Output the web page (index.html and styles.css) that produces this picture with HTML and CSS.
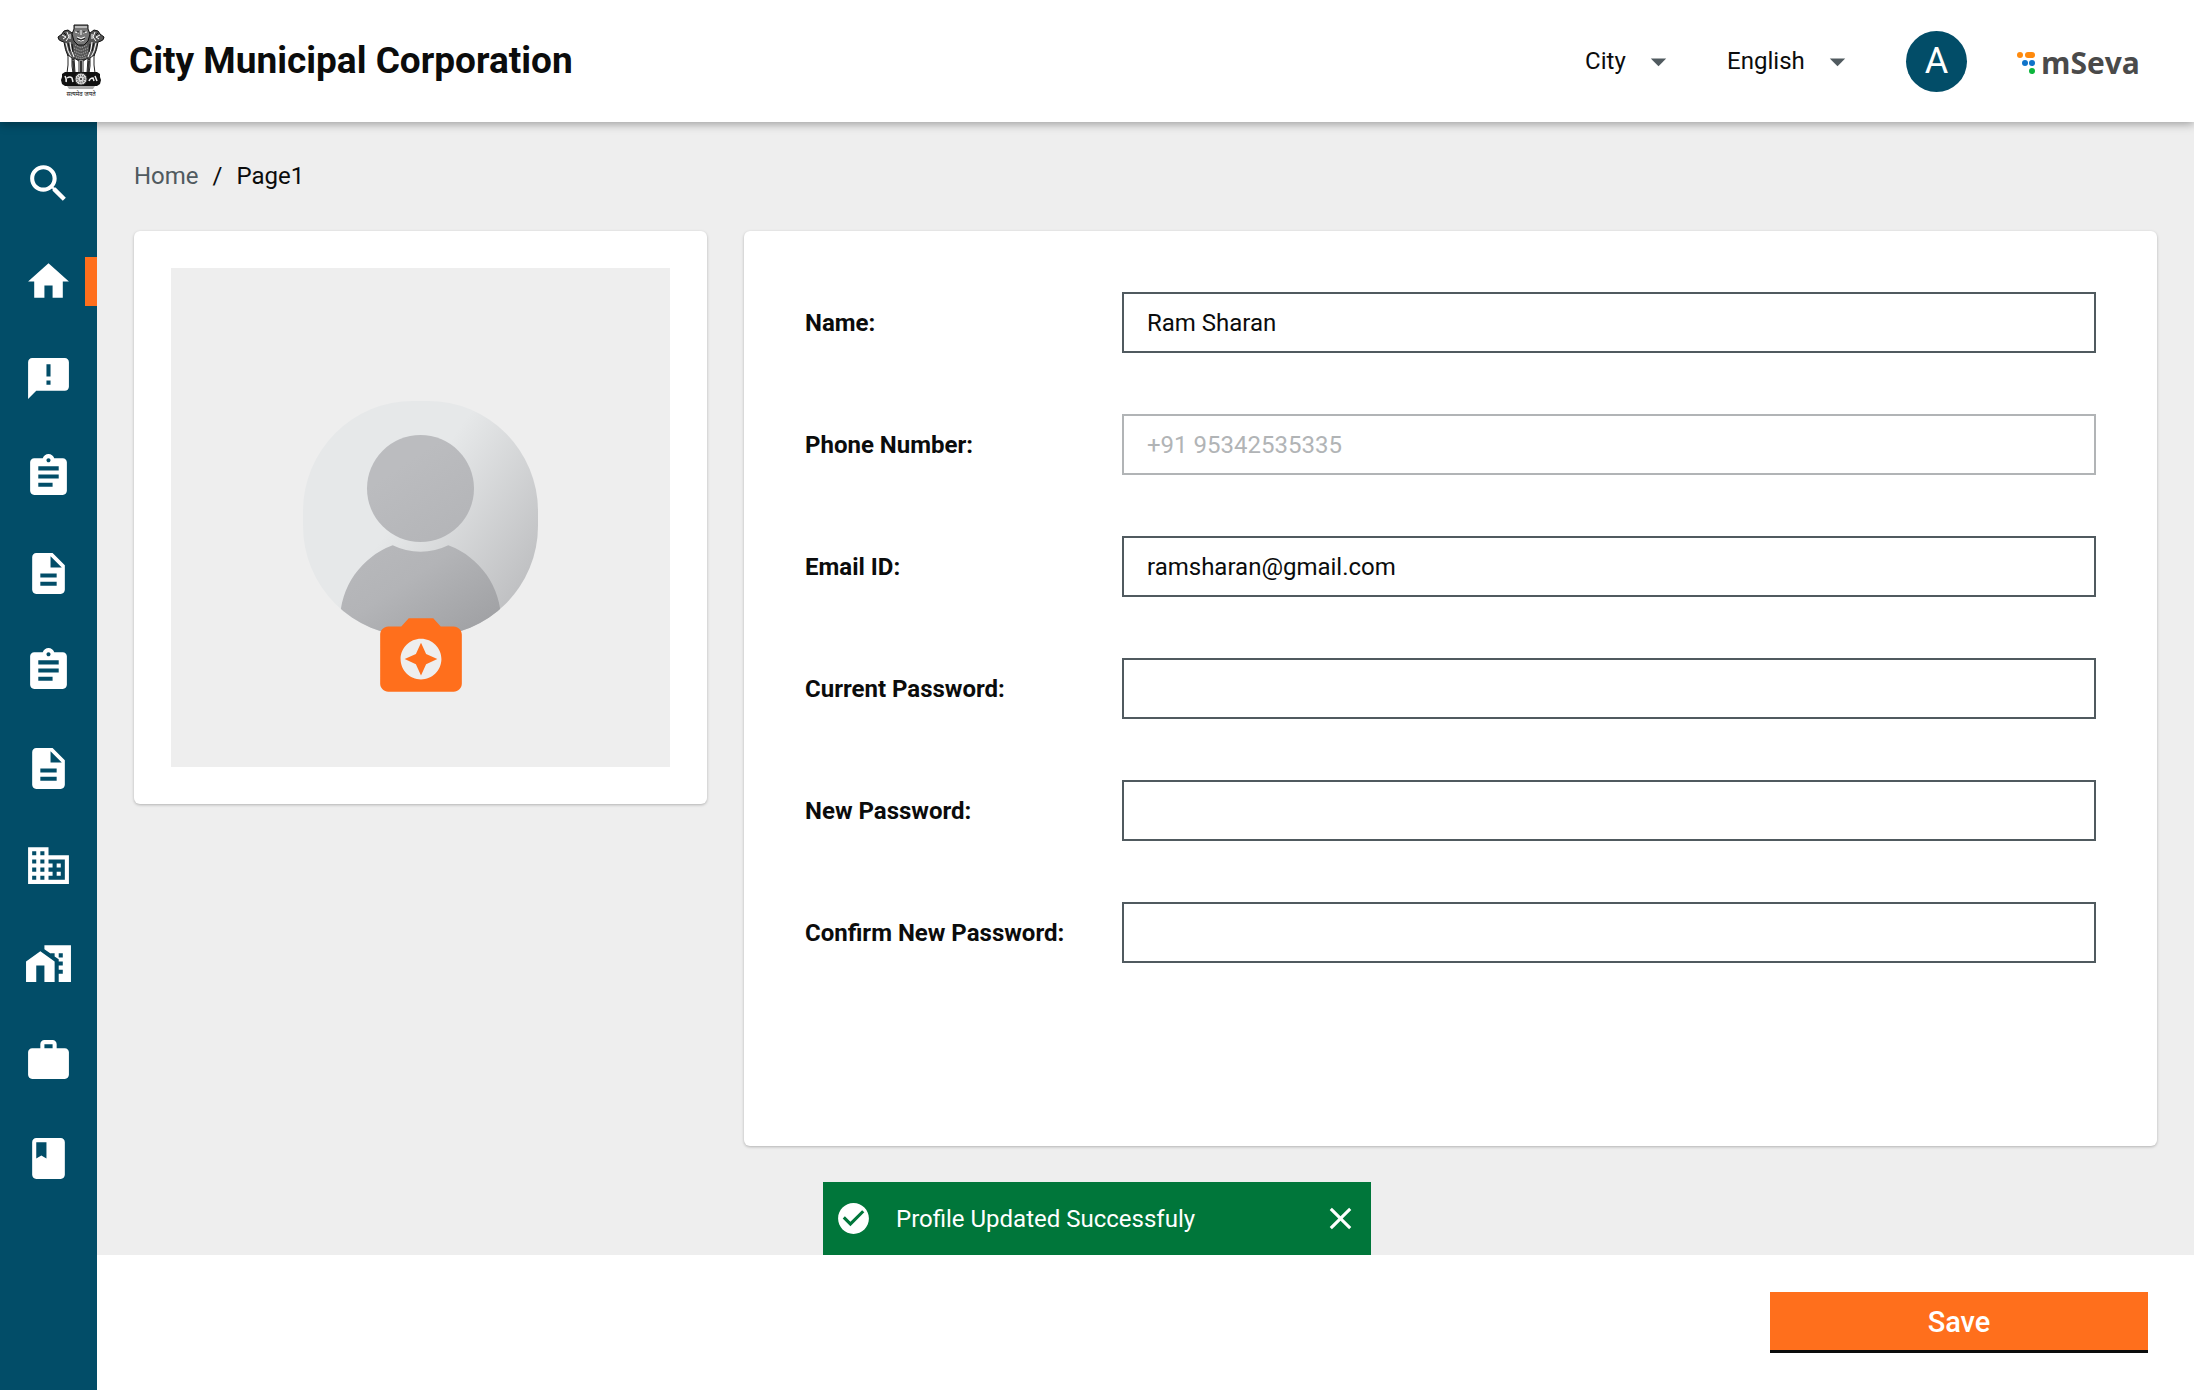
FILE: index.html
```html
<!DOCTYPE html>
<html lang="en">
<head>
<meta charset="utf-8">
<meta name="viewport" content="width=device-width, initial-scale=1">
<title>City Municipal Corporation</title>
<link rel="stylesheet" href="styles.css">
</head>
<body>
<svg class="sprite" aria-hidden="true">
  <symbol id="i-assignment" viewBox="0 0 24 24"><path d="M19 3h-4.180C14.400 1.840 13.300 1 12 1c-1.300 0-2.400.840-2.820 2H5c-1.100 0-2 .900-2 2v14c0 1.100.900 2 2 2h14c1.100 0 2-.900 2-2V5c0-1.100-.900-2-2-2zm-7 0c.550 0 1 .450 1 1s-.450 1-1 1-1-.450-1-1 .450-1 1-1zm2 14H7v-2h7v2zm3-4H7v-2h10v2zm0-4H7V7h10v2z"/></symbol>
  <symbol id="i-description" viewBox="0 0 24 24"><path d="M14 2H6c-1.100 0-1.990.900-1.990 2L4 20c0 1.100.890 2 1.990 2H18c1.100 0 2-.900 2-2V8l-6-6zm2 16H8v-2h8v2zm0-4H8v-2h8v2zm-3-5V3.500L18.500 9H13z"/></symbol>
  <symbol id="i-caret" viewBox="0 0 24 24"><path d="M7 10l5 5 5-5z"/></symbol>
</svg>
<div class="page">
  <header class="topbar">
    <div class="brand">
      <div class="emblem">
        <svg viewBox="0 0 48 66" role="img" aria-label="State emblem">
          <g fill="#555" stroke="#111" stroke-width="1">
            <path d="M11 6q-5 0-6 4l-4 3q0 3 3 4l3 1q1 8 4 14l4 4h18l4-4q3-6 4-14l3-1q3-1 3-4l-4-3q-1-4-6-4l-4 3H15z"/>
            <path d="M17 1h14v4l2 5-2 7-4 4h-6l-4-4-2-7 2-5z" fill="#777"/>
          </g>
          <g fill="none" stroke="#fff" stroke-width="1">
            <path d="M18 3h12M18 8l4 1M30 8l-4 1M24 6v5M20 13q4 3 8 0M21 16q3 2 6 0"/>
            <path d="M5 11l4 2-3 2M10 8l2 5-3 4M43 11l-4 2 3 2M38 8l-2 5 3 4M13 10v5M35 10v5"/>
            <path d="M9 19l2 8 3 6M13 18l1 7 3 8M39 19l-2 8-3 6M35 18l-1 7-3 8"/>
          </g>
          <g fill="none" stroke="#111" stroke-width="1">
            <path d="M20 8h2M26 8h2M20 14q4 4 8 0M7 9l2 2M41 9l-2 2M11 19l2 8M37 19l-2 8M15 20l1 8M33 20l-1 8"/>
          </g>
          <g fill="none" stroke="#bbb" stroke-width="1" stroke-dasharray="1 1">
            <path d="M18 21l6 3 6-3M17 24l7 3 7-3M17 27l7 3 7-3M18 30l6 3 6-3M19 33l5 2 5-2"/>
          </g>
          <g fill="#fff" stroke="#222" stroke-width="1">
            <path d="M11 31l4 3v8l1 7h-6l1-8zM37 31l-4 3v8l-1 7h6l-1-8z"/>
            <path d="M17 34l5 3v12h-4zM31 34l-5 3v12h4z"/>
          </g>
          <path d="M15 37h2l1 12h-2zM33 37h-2l-1 12h2zM23 37h2v12h-2z" fill="#333"/>
          <path d="M8 48h32l3 2v3l1 3-1 4-3 2H8l-3-2-1-4 1-3v-3z" fill="#111"/>
          <path d="M10 62h28l-2 3H12z" fill="#aaa"/>
          <path d="M8 52q2 4 1 6M10 54q3-2 5 0l1 4M32 57q1-3 4-3l1 3M38 52l2 5" fill="none" stroke="#eee" stroke-width="1.500"/>
          <circle cx="24" cy="55" r="6" fill="#ddd" stroke="#333"/>
          <circle cx="24" cy="55" r="3.500" fill="none" stroke="#666" stroke-width="2" stroke-dasharray="1 1"/>
          <circle cx="24" cy="55" r="1" fill="#222"/>
        </svg>
        <span class="motto" lang="hi">सत्यमेव जयते</span>
      </div>
      <h1 class="brand-name">City Municipal Corporation</h1>
    </div>
    <div class="tools">
      <label class="dropdown"><select aria-label="City"><option>City</option></select><svg class="icon-sm" aria-hidden="true"><use href="#i-caret"/></svg></label>
      <label class="dropdown"><select aria-label="Language"><option>English</option></select><svg class="icon-sm" aria-hidden="true"><use href="#i-caret"/></svg></label>
      <button class="account" type="button" aria-label="Account">A</button>
      <div class="mseva">
        <svg class="mseva-mark" viewBox="0 0 20 24" aria-hidden="true">
          <circle cx="3" cy="4" r="3" fill="#ff8a0d"/><rect x="8" y="1" width="10" height="6" rx="3" fill="#ff8a0d"/>
          <circle cx="8" cy="12" r="3" fill="#0f73c9"/><circle cx="15" cy="12" r="3" fill="#0f73c9"/>
          <circle cx="15" cy="20" r="3" fill="#0cb53c"/>
        </svg>
        <span>mSeva</span>
      </div>
    </div>
  </header>

  <nav class="sidebar" aria-label="Main">
    <ul class="nav-list">
      <li><a href="#" aria-label="Search"><svg class="icon" viewBox="0 0 24 24"><path d="M15.500 14h-.790l-.280-.270C15.410 12.590 16 11.110 16 9.500 16 5.910 13.090 3 9.500 3S3 5.910 3 9.500 5.910 16 9.500 16c1.610 0 3.090-.590 4.230-1.570l.270.280v.790l5 4.990L20.490 19l-4.990-5zm-6 0C7.010 14 5 11.990 5 9.500S7.010 5 9.500 5 14 7.010 14 9.500 11.990 14 9.500 14z"/></svg></a></li>
      <li><a class="active" href="#" aria-label="Home"><svg class="icon" viewBox="0 0 24 24"><path d="M10 20v-6h4v6h5v-8h3L12 3 2 12h3v8z"/></svg></a></li>
      <li><a href="#" aria-label="Complaints"><svg class="icon" viewBox="0 0 24 24"><path d="M20 2H4c-1.100 0-1.990.900-1.990 2L2 22l4-4h14c1.100 0 2-.900 2-2V4c0-1.100-.900-2-2-2zm-7 9h-2V5h2v6zm0 4h-2v-2h2v2z"/></svg></a></li>
      <li><a href="#" aria-label="Assignments"><svg class="icon"><use href="#i-assignment"/></svg></a></li>
      <li><a href="#" aria-label="Documents"><svg class="icon"><use href="#i-description"/></svg></a></li>
      <li><a href="#" aria-label="Tasks"><svg class="icon"><use href="#i-assignment"/></svg></a></li>
      <li><a href="#" aria-label="Records"><svg class="icon"><use href="#i-description"/></svg></a></li>
      <li><a href="#" aria-label="Business"><svg class="icon" viewBox="0 0 24 24"><path d="M12 7V3H2v18h20V7H12zM6 19H4v-2h2v2zm0-4H4v-2h2v2zm0-4H4V9h2v2zm0-4H4V5h2v2zm4 12H8v-2h2v2zm0-4H8v-2h2v2zm0-4H8V9h2v2zm0-4H8V5h2v2zm10 12h-8v-2h2v-2h-2v-2h2v-2h-2V9h8v10zm-2-8h-2v2h2v-2zm0 4h-2v2h2v-2z"/></svg></a></li>
      <li><a href="#" aria-label="Property"><svg class="icon" viewBox="0 0 24 24"><path d="M1 11v10h5v-8h4v8h5V11L8 6z"/><path d="M10 3v1.970l3 2.140V7h2v1.540l2 1.430V11h2v2h-2v2h2v2h-2v4h6V3H10zm9 6h-2V7h2v2z"/></svg></a></li>
      <li><a href="#" aria-label="Trade"><svg class="icon" viewBox="0 0 24 24"><path d="M10 2h4c1.100 0 2 .900 2 2v2h4c1.100 0 2 .900 2 2v11c0 1.100-.900 2-2 2H4c-1.100 0-2-.900-2-2V8c0-1.100.900-2 2-2h4V4c0-1.100.900-2 2-2zm4 4V4h-4v2h4z"/></svg></a></li>
      <li><a href="#" aria-label="Library"><svg class="icon" viewBox="0 0 24 24"><path d="M18 2H6c-1.100 0-2 .900-2 2v16c0 1.100.900 2 2 2h12c1.100 0 2-.900 2-2V4c0-1.100-.900-2-2-2zM6 4h5v8l-2.500-1.500L6 12V4z"/></svg></a></li>
    </ul>
  </nav>

  <main class="content">
    <nav class="crumbs" aria-label="Breadcrumb">
      <a href="#">Home</a><span>/</span><span aria-current="page">Page1</span>
    </nav>
    <div class="panels">
      <section class="card photo-card" aria-label="Profile photo">
        <div class="photo">
          <svg class="avatar" viewBox="0 0 235 235" aria-hidden="true">
            <defs>
              <linearGradient id="bg" x1="0" y1="0" x2="1" y2="0.700"><stop offset="0.500" stop-color="#e6e8e9"/><stop offset="1" stop-color="#bfc0c2"/></linearGradient>
              <linearGradient id="fg" gradientUnits="userSpaceOnUse" x1="90" y1="70" x2="200" y2="235"><stop offset="0" stop-color="#bbbcbf"/><stop offset="0.500" stop-color="#b3b4b7"/><stop offset="1" stop-color="#9c9da0"/></linearGradient>
              <clipPath id="frame"><rect width="235" height="235" rx="110"/></clipPath>
            </defs>
            <g clip-path="url(#frame)">
              <rect width="235" height="235" fill="url(#bg)"/>
              <circle cx="117.500" cy="87.500" r="53.500" fill="url(#fg)"/>
              <path d="M37 235V220A80.500 80.500 0 0 1 89.700 144.300A63.400 63.400 0 0 0 145.300 144.300A80.500 80.500 0 0 1 198 220V235z" fill="url(#fg)"/>
            </g>
          </svg>
          <button class="camera" type="button" aria-label="Change photo">
            <svg viewBox="0 0 24 24" aria-hidden="true"><circle cx="12" cy="13" r="5.500" fill="#eee"/><path d="M9 3L7.170 5H4c-1.100 0-2 .900-2 2v12c0 1.100.900 2 2 2h16c1.100 0 2-.900 2-2V7c0-1.100-.900-2-2-2h-3.170L15 3H9zm3 15c-2.760 0-5-2.240-5-5s2.240-5 5-5 5 2.240 5 5-2.240 5-5 5z"/><path d="M12 17l1.250-2.750L16 13l-2.750-1.250L12 9l-1.250 2.750L8 13l2.750 1.250z"/></svg>
          </button>
        </div>
      </section>
      <form class="card form" id="profile">
        <label for="name">Name:</label><input id="name" type="text" value="Ram Sharan">
        <label for="phone">Phone Number:</label><input id="phone" type="tel" value="+91 95342535335" disabled>
        <label for="email">Email ID:</label><input id="email" type="email" value="ramsharan@gmail.com">
        <label for="current">Current Password:</label><input id="current" type="password">
        <label for="new">New Password:</label><input id="new" type="password">
        <label for="confirm">Confirm New Password:</label><input id="confirm" type="password">
      </form>
    </div>
  </main>

  <footer class="actions">
    <button class="save" type="submit" form="profile">Save</button>
  </footer>
</div>

<div class="toast" role="status">
  <svg class="icon-sm" viewBox="0 0 24 24" aria-hidden="true"><path d="M12 2C6.480 2 2 6.480 2 12s4.480 10 10 10 10-4.480 10-10S17.520 2 12 2zm-2 15l-5-5 1.410-1.410L10 14.170l7.590-7.590L19 8l-9 9z"/></svg>
  <span class="toast-text">Profile Updated Successfuly</span>
  <button class="toast-close" type="button" aria-label="Close"><svg class="icon-sm" viewBox="0 0 24 24"><path d="M19 6.410L17.590 5 12 10.590 6.410 5 5 6.410 10.590 12 5 17.590 6.410 19 12 13.410 17.590 19 19 17.590 13.410 12z"/></svg></button>
</div>
</body>
</html>
```
FILE: styles.css
```css
* { box-sizing: border-box; }

body {
  margin: 0;
  font-family: Roboto, "Liberation Sans", sans-serif;
  font-size: 24px;
  line-height: 32px;
  color: #0b0c0c;
  background: #eee;
}

button, input, select { font: inherit; color: inherit; }
button { padding: 0; border: 0; background: none; cursor: pointer; }
svg { display: block; fill: currentColor; }

.sprite { position: absolute; width: 0; height: 0; }
.icon { width: 49px; height: 49px; }
.icon-sm { width: 37px; height: 37px; flex: none; }

.page {
  display: grid;
  grid-template: auto 1fr auto / 97px 1fr;
  min-height: 100vh;
}

/* Header */
.topbar {
  grid-column: 1 / -1;
  z-index: 1;
  display: flex;
  align-items: center;
  justify-content: space-between;
  height: 122px;
  padding: 0 54px 0 57px;
  background: #fff;
  box-shadow: 0 2px 9px rgba(0, 0, 0, .35);
}
.brand { display: flex; align-items: center; gap: 24px; }
.emblem { width: 48px; }
.motto {
  display: block;
  font-family: "Noto Sans", sans-serif;
  font-size: 6px;
  line-height: 8px;
  text-align: center;
  white-space: nowrap;
}
.brand-name { margin: 0; font-size: 37px; line-height: 48px; font-weight: 700; }
.tools { display: flex; align-items: center; gap: 50px; }
.dropdown { display: flex; align-items: center; gap: 14px; color: #505a5f; }
.dropdown select {
  appearance: none;
  padding: 0;
  border: 0;
  background: none;
  color: #0b0c0c;
}
.account {
  width: 61px;
  height: 61px;
  border-radius: 50%;
  background: #024d68;
  color: #fff;
  font-size: 36px;
}
.mseva {
  display: flex;
  align-items: center;
  gap: 4px;
  padding-top: 4px;
  color: #4a4a4a;
  font-family: "Open Sans", "Noto Sans", sans-serif;
  font-size: 30px;
  font-weight: 700;
}
.mseva-mark { width: 20px; height: 24px; }

/* Sidebar */
.sidebar { grid-row: 2 / 4; background: #024d68; color: #fff; }
.nav-list {
  display: grid;
  grid-auto-rows: 1fr;
  height: 1072px;
  margin: 13px 0 0;
  padding: 0;
  list-style: none;
}
.nav-list a {
  position: relative;
  display: grid;
  place-items: center;
  height: 100%;
  color: inherit;
}
.nav-list .active::after {
  content: "";
  position: absolute;
  right: 0;
  width: 12px;
  height: 49px;
  background: #ff6f1c;
}

/* Content */
.content {
  display: flex;
  flex-direction: column;
  gap: 39px;
  padding: 38px 37px 109px;
}
.crumbs { display: flex; gap: 14px; }
.crumbs a { color: #505a5f; text-decoration: none; }
.panels { flex: 1; display: flex; gap: 37px; }
.card {
  border-radius: 6px;
  background: #fff;
  box-shadow: 0 1px 3px rgba(0, 0, 0, .25);
}
.photo-card { flex: none; align-self: flex-start; width: 573px; padding: 37px; }
.photo {
  display: flex;
  flex-direction: column;
  align-items: center;
  aspect-ratio: 1;
  padding-top: 133px;
  background: #eee;
}
.avatar { width: 235px; height: 235px; }
.camera { width: 98px; height: 98px; margin-top: -30px; color: #ff6f1c; }

.form {
  flex: 1;
  display: grid;
  grid-template-columns: 256px 1fr;
  grid-auto-rows: 61px;
  gap: 61px;
  align-content: start;
  align-items: center;
  padding: 61px;
}
.form label { font-weight: 700; white-space: nowrap; }
.form input {
  width: 100%;
  height: 61px;
  padding: 0 23px;
  border: 2px solid #505a5f;
  border-radius: 0;
  background: #fff;
}
.form input:disabled { border-color: #b1b4b6; color: #b1b4b6; }

/* Footer */
.actions {
  display: flex;
  justify-content: flex-end;
  padding: 37px 46px;
  background: #fff;
}
.save {
  width: 378px;
  height: 61px;
  padding-bottom: 2px;
  background: #ff6f1c;
  box-shadow: inset 0 -3px #0b0c0c;
  color: #fff;
  font-size: 29px;
  font-weight: 500;
}

/* Toast */
.toast {
  position: fixed;
  right: 0;
  bottom: 135px;
  left: 0;
  z-index: 2;
  display: flex;
  align-items: center;
  gap: 24px;
  width: 548px;
  height: 73px;
  margin: 0 auto;
  padding: 0 12px;
  background: #00763a;
  color: #fff;
}
.toast-text { flex: 1; }
```
